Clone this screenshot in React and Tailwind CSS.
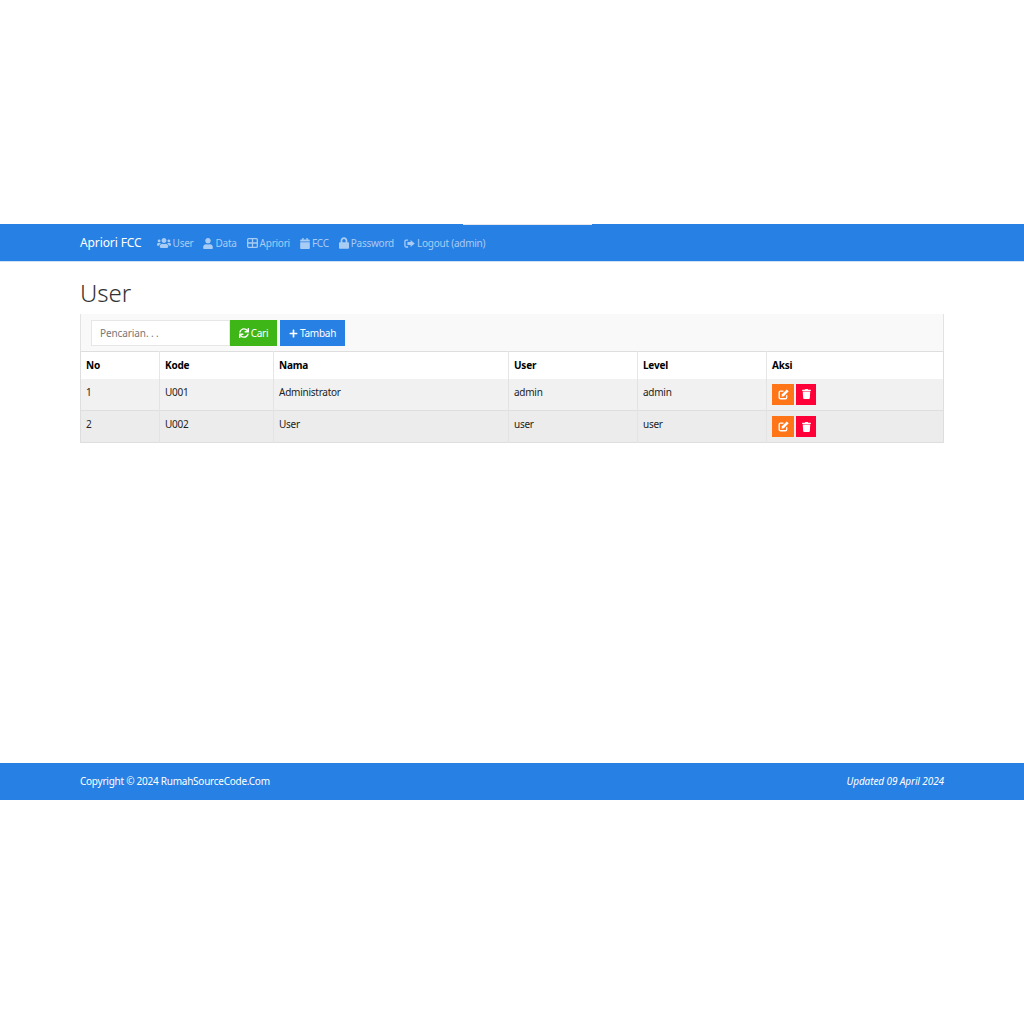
import { FaUsers, FaUser, FaCalendar, FaLock, FaSync, FaPlus, FaTrash } from "react-icons/fa";

const SignOutIcon = ({ className }) => (
  <svg viewBox="0 0 16 14" className={className} fill="currentColor">
    <path d="M6 1H3A2.6 2.6 0 0 0 .4 3.6v6.8A2.6 2.6 0 0 0 3 13h3v-1.9H3.3a1 1 0 0 1-1-1V3.9a1 1 0 0 1 1-1H6z" />
    <path d="M9.6 2 15.6 7 9.6 12V9.2H5V4.8H9.6z" />
  </svg>
);

const TableIcon = ({ className }) => (
  <svg viewBox="0 0 12 11" className={className} fill="none" stroke="currentColor" strokeWidth="1.4">
    <rect x="0.7" y="0.7" width="10.6" height="9.6" rx="1" />
    <path d="M0.7 5.5h10.6M6 0.7v9.6" />
  </svg>
);

const EditIcon = ({ className }) => (
  <svg viewBox="0 0 14 14" className={className} fill="none" stroke="currentColor">
    <path strokeWidth="1.7" d="M7 2.8H3.2A1.7 1.7 0 0 0 1.5 4.5v6.2c0 .9.8 1.7 1.7 1.7h6.2c.9 0 1.7-.8 1.7-1.7V8" />
    <path fill="currentColor" stroke="none" d="M11.2.6 13.6 3 7.4 9.2 4.4 9.8 5 6.8z" />
  </svg>
);

const menus = [
  { label: "User", Icon: FaUsers, icon: "w-[14px] h-[14px]" },
  { label: "Data", Icon: FaUser, icon: "w-[10px] h-[11px]" },
  { label: "Apriori", Icon: TableIcon, icon: "w-[11px] h-[10px]" },
  { label: "FCC", Icon: FaCalendar, icon: "w-[10px] h-[11px]" },
  { label: "Password", Icon: FaLock, icon: "w-[10px] h-[12px]" },
  { label: "Logout (admin)", Icon: SignOutIcon, icon: "w-[11px] h-[11px]" },
];

const users = [
  { no: 1, kode: "U001", nama: "Administrator", user: "admin", level: "admin", bg: "bg-[#f1f1f1]" },
  { no: 2, kode: "U002", nama: "User", user: "user", level: "user", bg: "bg-[#ececec]" },
];

const thClass = "h-[27px] px-[5px] pt-[1px] text-left align-middle font-bold text-[10px] tracking-[-0.22px] text-black border-l border-[#e6e6e6] first:border-l-0";
const tdClass = "px-[5px] pt-[6px] align-top text-[10px] tracking-[-0.25px] text-[#222] border-l border-[#e3e3e3] first:border-l-0";
const actionCell = "px-[5px] pt-[5px] align-top border-l border-[#e3e3e3]";

export default function App() {
  return (
    <div className="min-h-[1024px] bg-white pt-[224px] font-['Noto_Sans',sans-serif]">
      <nav className="relative h-[38px] bg-[#2780e3] px-[80px] flex items-center border-b border-[#cfe2f8]">
        <div className="absolute left-[463px] top-0 h-px w-[129px] bg-[#e4e8ee]"></div>
        <span className="text-white text-[12px] tracking-[-0.1px] mr-[15px] pt-[1px]">Apriori FCC</span>
        <div className="flex items-center gap-[10px] text-[10px] tracking-[-0.25px] text-[#a9ccf5] pt-[1px]">
          {menus.map(({ label, Icon, icon }) => (
            <span key={label} className="flex items-center gap-[2px]">
              <Icon className={icon} />
              {label}
            </span>
          ))}
        </div>
      </nav>

      <main className="h-[501px] px-[80px]">
        <h1 className="h-[52px] pt-[13px] text-[24px] leading-[36px] font-light text-[#333]">User</h1>

        <div className="h-[37px] bg-[#f9f9f9] border-x border-[#e3e3e3] pl-[10px] flex items-center">
          <input
            readOnly
            placeholder="Pencarian. . ."
            className="w-[139px] h-[26px] bg-white border border-[#e6e6e6] px-[8px] text-[10px] tracking-[-0.1px] placeholder:text-[#777] outline-none"
          />
          <button className="w-[47px] h-[26px] pt-[1px] bg-[#3fb618] text-white text-[10px] tracking-[-0.25px] flex items-center justify-center gap-[2px]">
            <FaSync className="w-[10px] h-[10px]" />
            Cari
          </button>
          <button className="ml-[3px] w-[65px] h-[26px] pt-[1px] bg-[#2780e3] text-white text-[10px] tracking-[-0.25px] flex items-center justify-center gap-[2px]">
            <FaPlus className="w-[9px] h-[9px]" />
            Tambah
          </button>
        </div>

        <table className="w-[864px] table-fixed border-collapse border border-[#dedede]">
          <colgroup>
            <col className="w-[79px]" />
            <col className="w-[114px]" />
            <col className="w-[235px]" />
            <col className="w-[129px]" />
            <col className="w-[129px]" />
            <col />
          </colgroup>
          <thead>
            <tr>
              <th className={thClass}>No</th>
              <th className={thClass}>Kode</th>
              <th className={thClass}>Nama</th>
              <th className={thClass}>User</th>
              <th className={thClass}>Level</th>
              <th className={thClass}>Aksi</th>
            </tr>
          </thead>
          <tbody>
            {users.map((row) => (
              <tr key={row.no} className={`h-[32px] border-t border-[#dedede] first:border-t-0 ${row.bg}`}>
                <td className={tdClass}>{row.no}</td>
                <td className={tdClass}>{row.kode}</td>
                <td className={tdClass}>{row.nama}</td>
                <td className={tdClass}>{row.user}</td>
                <td className={tdClass}>{row.level}</td>
                <td className={actionCell}>
                  <div className="flex gap-[2px]">
                    <button className="w-[22px] h-[21px] bg-[#ff7518] text-white flex items-center justify-center">
                      <EditIcon className="w-[11px] h-[11px]" />
                    </button>
                    <button className="w-[20px] h-[21px] bg-[#ff0039] text-white flex items-center justify-center">
                      <FaTrash className="w-[9px] h-[10px]" />
                    </button>
                  </div>
                </td>
              </tr>
            ))}
          </tbody>
        </table>
      </main>

      <footer className="h-[37px] bg-[#2780e3] px-[80px] flex items-center justify-between text-[10px] tracking-[-0.25px] text-white">
        <span>Copyright © 2024 RumahSourceCode.Com</span>
        <em className="tracking-[-0.1px]">Updated 09 April 2024</em>
      </footer>
    </div>
  );
}
